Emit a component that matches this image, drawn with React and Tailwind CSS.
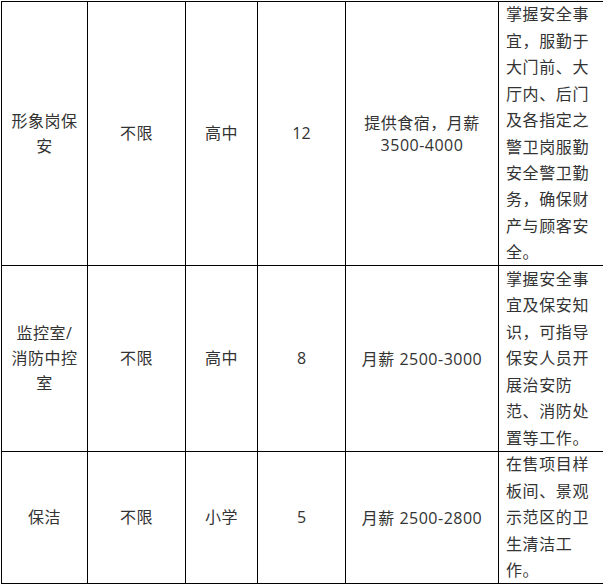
const rows = [
  {
    post: ["形象岗保", "安"],
    age: "不限",
    edu: "高中",
    num: "12",
    pay: ["提供食宿，月薪", "3500-4000"],
    desc: "掌握安全事宜，服勤于大门前、大厅内、后门及各指定之警卫岗服勤安全警卫勤务，确保财产与顾客安全。",
  },
  {
    post: ["监控室/", "消防中控", "室"],
    age: "不限",
    edu: "高中",
    num: "8",
    pay: ["月薪 2500-3000"],
    desc: "掌握安全事宜及保安知识，可指导保安人员开展治安防范、消防处置等工作。",
  },
  {
    post: ["保洁"],
    age: "不限",
    edu: "小学",
    num: "5",
    pay: ["月薪 2500-2800"],
    desc: "在售项目样板间、景观示范区的卫生清洁工作。",
  },
];

function Cell({ children }) {
  return (
    <div className="flex flex-col items-center justify-center border-r border-b border-black text-center leading-[25px] tracking-[0.5px]">
      {children}
    </div>
  );
}

export default function App() {
  return (
    <div className="w-[603px] h-[585px] overflow-hidden bg-white">
      <div
        className="ml-px mt-px w-[604px] grid grid-cols-[86px_98px_72px_88px_153px_106px] grid-rows-[264px_186px_132px] border-l border-t border-black text-[16px] text-[#333]"
        style={{ fontFamily: '"Open Sans", "Noto Sans CJK SC", sans-serif' }}
      >
        {rows.map((r, i) => (
          <div key={i} className="contents">
            <Cell>
              {r.post.map((l, j) => (
                <span key={j}>{l}</span>
              ))}
            </Cell>
            <Cell>{r.age}</Cell>
            <Cell>{r.edu}</Cell>
            <Cell>
              <span className="tracking-normal">{r.num}</span>
            </Cell>
            <Cell>
              {r.pay.map((l, j) => (
                <span key={j} className="leading-[22px]">{l}</span>
              ))}
            </Cell>
            <div className="flex items-center overflow-hidden border-r border-b border-black pl-[7px] pr-[4px] leading-[26.4px] tracking-[0.6px]">
              <p>{r.desc}</p>
            </div>
          </div>
        ))}
      </div>
    </div>
  );
}
